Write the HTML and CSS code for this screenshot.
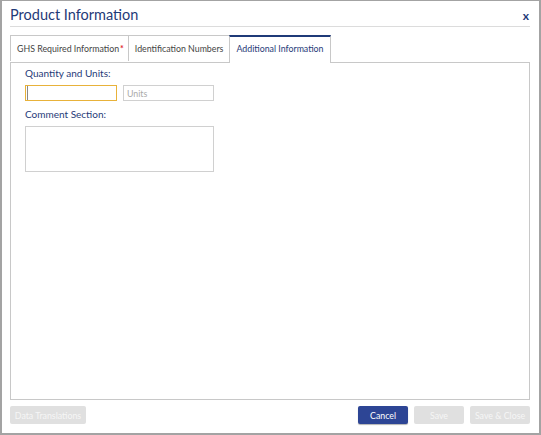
FILE: index.html
```html
<!DOCTYPE html>
<html lang="en">
<head>
    <meta charset="UTF-8">
    <title>Product Information</title>
    <link rel="stylesheet" href="styles.css">
</head>
<body>
    <div class="dialog">
        <div class="dialog-header">
            <h1 class="dialog-title">Product Information</h1>
            <span class="close-btn">x</span>
        </div>
        <div class="tabs">
            <div class="tab first">GHS Required Information<span class="required">*</span></div>
            <div class="tab">Identification Numbers</div>
            <div class="tab active">Additional Information</div>
        </div>
        <div class="tab-panel">
            <label class="field-label">Quantity and Units:</label>
            <div class="field-row">
                <input type="text" class="text-input focused" value="">
                <input type="text" class="text-input" placeholder="Units">
            </div>
            <label class="field-label">Comment Section:</label>
            <textarea class="comment-box"></textarea>
        </div>
        <div class="dialog-footer">
            <button class="btn disabled">Data Translations</button>
            <div class="footer-right">
                <button class="btn primary">Cancel</button>
                <button class="btn disabled save">Save</button>
                <button class="btn disabled save-close">Save &amp; Close</button>
            </div>
        </div>
    </div>
</body>
</html>
```

FILE: styles.css
```css
body {
    margin: 0;
    font-family: Lato, "Open Sans", sans-serif;
    background-color: #fff;
}
.dialog {
    box-sizing: border-box;
    width: 541px;
    height: 435px;
    border: 1px solid #a3a3a3;
    border-width: 1px 2px 2px 2px;
    padding: 0 9px 0 8px;
    display: flex;
    flex-direction: column;
}
.dialog-header {
    height: 25px;
    border-bottom: 1px solid #dcdcdc;
    display: flex;
    justify-content: space-between;
    align-items: center;
}
.dialog-title {
    margin: 0;
    font-size: 14.5px;
    font-weight: normal;
    color: #1f3a78;
    line-height: 20px;
    margin-top: 3px;
}
.close-btn {
    font-size: 12px;
    font-weight: bold;
    color: #1f3a78;
    margin-right: 1px;
    margin-top: 4px;
}
.tabs {
    display: flex;
    margin-top: 8px;
    position: relative;
    z-index: 1;
}
.tab {
    height: 25px;
    line-height: 26px;
    padding: 0 6px;
    font-size: 8.8px;
    color: #444;
    border: 1px solid #c8c8c8;
    border-bottom: none;
    margin-right: -1px;
    background: #fff;
    white-space: nowrap;
}
.tab.first {
    padding: 0 4px 0 6px;
}
.tab .required {
    color: #e0262c;
    font-weight: bold;
    margin-left: 1px;
}
.tab.active {
    color: #1f3a78;
    border-top: 2px solid #1f3a78;
    height: 25px;
    line-height: 24px;
    padding-bottom: 1px;
    margin-bottom: -1px;
}
.tab-panel {
    border: 1px solid #c8c8c8;
    height: 338px;
    padding: 3px 14px;
    box-sizing: border-box;
    display: flex;
    flex-direction: column;
    align-items: flex-start;
}
.field-label {
    font-size: 10px;
    color: #1f3a78;
    line-height: 14px;
}
.field-row {
    display: flex;
    gap: 6px;
    margin: 5px 0 6px 0;
}
.text-input {
    box-sizing: border-box;
    width: 91px;
    height: 16px;
    border: 1px solid #d0d0d0;
    padding: 0 3px;
    font-family: inherit;
    font-size: 8.8px;
    outline: none;
}
.text-input::placeholder {
    color: #aaa;
}
.text-input.focused {
    width: 92px;
    border-color: #e8b23a;
    box-shadow: inset 2px 0 0 -1px #fff, inset 3px 0 0 -1px #888;
}
.comment-box {
    box-sizing: border-box;
    width: 189px;
    height: 46px;
    margin-top: 5px;
    border: 1px solid #d0d0d0;
    resize: none;
    outline: none;
}
.dialog-footer {
    display: flex;
    justify-content: space-between;
    margin-top: 6px;
}
.footer-right {
    display: flex;
    gap: 6px;
}
.btn {
    height: 18px;
    border: none;
    border-radius: 2px;
    font-family: inherit;
    font-size: 8.8px;
    padding: 0;
    white-space: nowrap;
}
.btn.disabled {
    background-color: #e0e0e0;
    color: #f6f6f6;
    width: 76px;
}
.btn.primary {
    background-color: #2d4595;
    color: #fff;
    width: 50px;
    box-shadow: 0 1px 1px rgba(0, 0, 0, 0.3);
}
.btn.save {
    width: 50px;
}
.btn.save-close {
    width: 60px;
}
```
